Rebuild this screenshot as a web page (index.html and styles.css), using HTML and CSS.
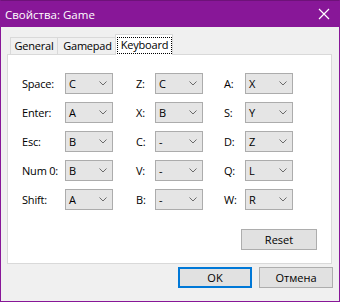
FILE: index.html
```html
<!DOCTYPE html>
<html>
<head>
    <title>Свойства: Game</title>
    <link rel="stylesheet" href="styles.css">
</head>
<body>
    <div class="window">
        <!-- Barra de título -->
        <div class="titlebar">
            <span class="title">Свойства: Game</span>
            <svg class="close" width="12" height="12" viewBox="0 0 12 12">
                <path d="M1 1 L11 11 M11 1 L1 11" stroke="#fff" stroke-width="1.2" fill="none"/>
            </svg>
        </div>

        <div class="client">
            <!-- Pestañas -->
            <div class="tabs">
                <div class="tab tab-general">General</div>
                <div class="tab tab-gamepad">Gamepad</div>
                <div class="tab tab-keyboard active"><span class="focus">Keyboard</span></div>
            </div>

            <!-- Panel de teclas -->
            <div class="panel">
                <div class="keys" id="keys"></div>
                <div class="panel-actions">
                    <button class="btn btn-reset">Reset</button>
                </div>
            </div>

            <div class="dialog-actions">
                <button class="btn btn-default">OK</button>
                <button class="btn">Отмена</button>
            </div>
        </div>
    </div>

<script>
const filas = [
    [['Space', 'C'], ['Z', 'C'], ['A', 'X']],
    [['Enter', 'A'], ['X', 'B'], ['S', 'Y']],
    [['Esc', 'B'], ['C', '-'], ['D', 'Z']],
    [['Num 0', 'B'], ['V', '-'], ['Q', 'L']],
    [['Shift', 'A'], ['B', '-'], ['W', 'R']]
];

const chevron = '<svg class="arrow" width="8" height="5" viewBox="0 0 8 5">' +
    '<polyline points="0.5,0.5 4,4 7.5,0.5" fill="none" stroke="#6b6b6b" stroke-width="1"/></svg>';

function renderTeclas() {
    const container = document.getElementById('keys');
    container.innerHTML = '';

    filas.forEach(fila => {
        fila.forEach(([tecla, valor], col) => {
            const label = document.createElement('div');
            label.className = `key-label col-${col}`;
            label.textContent = tecla + ':';
            container.appendChild(label);

            const combo = document.createElement('div');
            combo.className = 'combo';
            combo.innerHTML = `<span class="combo-value">${valor}</span>${chevron}`;
            container.appendChild(combo);
        });
    });
}

renderTeclas();
</script>
</body>
</html>
```

FILE: styles.css
```css
* { box-sizing: border-box; }
body { margin: 0; font-family: "Open Sans", "Noto Sans", sans-serif; font-size: 11px; letter-spacing: -0.2px; color: #000; background: #fff; }

.window { width: 340px; height: 302px; border: 1px solid #881798; border-top-color: #6e1279; background: #f0f0f0; display: flex; flex-direction: column; }
.titlebar { height: 26px; background: #881798; color: #fff; display: flex; align-items: center; justify-content: space-between; padding: 0 9px 0 4px; }
.title { font-size: 11.5px; letter-spacing: 0; }
.close { display: block; }

.client { flex: 1; padding: 7px 6px 0 6px; display: flex; flex-direction: column; }

.tabs { display: flex; align-items: flex-end; height: 20px; padding-left: 3px; position: relative; z-index: 1; }
.tab { height: 17px; border: 1px solid #d9d9d9; border-bottom: none; background: #f0f0f0; text-align: center; line-height: 15px; }
.tab + .tab { margin-left: -1px; }
.tab-general { width: 48px; }
.tab-gamepad { width: 61px; }
.tab-keyboard { width: 54px; }
.tab.active { height: 21px; width: 58px; margin-left: -3px; margin-right: -2px; margin-bottom: -1px; background: #fff; padding: 2px 0 0 1px; }
.focus { display: block; height: 17px; border: 1px dotted #000; line-height: 14px; }

.panel { height: 210px; margin-right: 1px; background: #fff; border: 1px solid #d9d9d9; padding: 18px 14px 13px 14px; display: flex; flex-direction: column; }
.keys { display: grid; grid-template-columns: 43px 48px 42px 48px 42px 48px; grid-auto-rows: 21px; row-gap: 8px; align-items: center; }
.key-label.col-1 { padding-left: 23px; }
.key-label.col-2 { padding-left: 21px; }

.combo { height: 21px; border: 1px solid #acacac; background: #e5e5e5; display: flex; align-items: center; justify-content: space-between; padding: 0 5px 0 3px; }
.arrow { display: block; }

.panel-actions { margin-top: auto; display: flex; justify-content: flex-end; }

.btn { font: inherit; color: #000; height: 21px; width: 74px; border: 1px solid #adadad; background: #e1e1e1; padding: 0; }
.btn-reset { width: 76px; }
.btn-default { border: 2px solid #0078d7; }

.dialog-actions { margin-top: 3px; display: flex; justify-content: flex-end; gap: 7px; }
```
